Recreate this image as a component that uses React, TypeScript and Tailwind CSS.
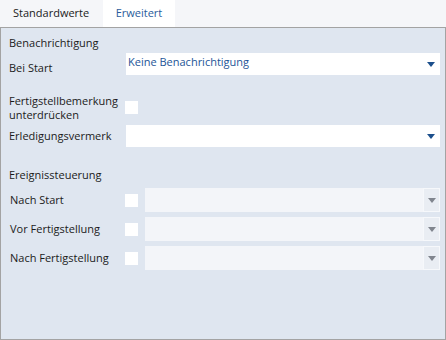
import React from "react";

const font = { fontFamily: '"Open Sans", "Noto Sans", sans-serif' };

function Arrow({ color }: { color: string }) {
  return (
    <svg width="8" height="5" viewBox="0 0 8 5" className="block">
      <path d="M0 0 L8 0 L4 5 Z" fill={color} />
    </svg>
  );
}

function Combo({ text, h }: { text?: string; h: string }) {
  return (
    <div className={`flex-1 mr-[5px] bg-white flex items-start justify-between ${h}`}>
      <span className="pl-[2px] pt-[1px] text-[#1d5597] leading-[16px]">{text}</span>
      <div className="mr-[5px] self-center">
        <Arrow color="#1c4f8c" />
      </div>
    </div>
  );
}

function DisabledCombo() {
  return (
    <div className="flex-1 mr-[5px] h-[24px] bg-[#f3f5f9] flex justify-end">
      <div className="w-[17px] h-full bg-[#e9edf3] border border-[#f6f8fb] flex items-center justify-center">
        <Arrow color="#80858e" />
      </div>
    </div>
  );
}

function Check({ cls = "" }: { cls?: string }) {
  return <div className={`w-[13px] h-[13px] bg-white shrink-0 ${cls}`} />;
}

function EventRow({ label, mt }: { label: string; mt: string }) {
  return (
    <div className={`flex items-center h-[24px] pl-[9px] ${mt}`}>
      <div className="w-[115px] leading-[14px]">{label}</div>
      <Check cls="mr-[7px]" />
      <DisabledCombo />
    </div>
  );
}

export default function App() {
  return (
    <div
      className="w-[446px] h-[340px] bg-[#f5f6f9] flex flex-col text-[11px] text-[#1b1b1b]"
      style={font}
    >
      <div className="h-[27px] flex shrink-0">
        <div className="w-[103px] pl-[13px] flex items-center">Standardwerte</div>
        <div className="w-[72px] bg-white flex items-center justify-center text-[#2a5c9c]">
          Erweitert
        </div>
      </div>
      <div className="flex-1 border border-[#a3a3a3] bg-[#dfe6f0] flex flex-col">
        <div className="mt-[8px] pl-[8px] leading-[14px]">Benachrichtigung</div>

        <div className="mt-[3px] flex items-start h-[22px] pl-[8px]">
          <div className="w-[117px] pt-[8px] leading-[14px]">Bei Start</div>
          <Combo text="Keine Benachrichtigung" h="h-[22px]" />
        </div>

        <div className="mt-[19px] flex items-start pl-[8px]">
          <div className="w-[116px] leading-[14px]">
            Fertigstellbemerkung
            <br />
            unterdrücken
          </div>
          <Check cls="mt-[7px]" />
        </div>

        <div className="mt-[3px] flex items-start h-[22px] pl-[8px]">
          <div className="w-[117px] pt-[4px] leading-[14px]">Erledigungsvermerk</div>
          <Combo h="h-[22px]" />
        </div>

        <div className="mt-[21px] pl-[8px] leading-[14px]">Ereignissteuerung</div>

        <EventRow label="Nach Start" mt="mt-[6px]" />
        <EventRow label="Vor Fertigstellung" mt="mt-[5px]" />
        <EventRow label="Nach Fertigstellung" mt="mt-[5px]" />
      </div>
    </div>
  );
}
